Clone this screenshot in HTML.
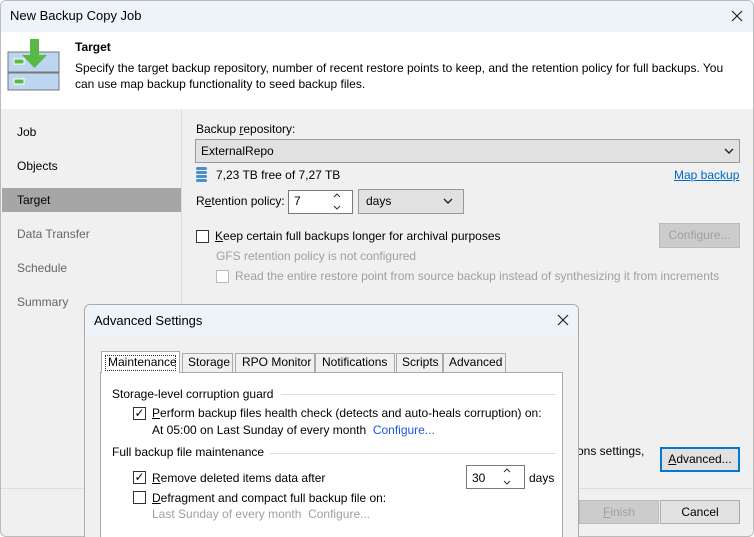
<!DOCTYPE html>
<html style="overflow:hidden;width:754px;height:537px"><head><meta charset="utf-8"><style>
*{box-sizing:border-box;margin:0;padding:0}
body{width:754px;height:537px;overflow:hidden;font-family:"Segoe UI","Liberation Sans",sans-serif;font-size:12px;color:#000;background:#fff;position:relative}
.a{position:absolute;white-space:nowrap}
.win{left:0;top:0;width:754px;height:537px;border:1px solid #bbb;border-radius:6px;background:#f0f0f0;overflow:hidden}
.btn{position:absolute;border:1px solid #adadad;background:#e1e1e1;text-align:center;line-height:22px}
.cb{position:absolute;width:13px;height:13px;border:1px solid #333;background:#fff}
.cb.dis{border-color:#bbb}
.chk{font-size:12px;line-height:11px;text-align:center}
.g{color:#a0a0a0}
.u{text-decoration:underline}
</style></head><body>
<div class="a win">
 <div class="a" style="left:0;top:0;width:754px;height:31px;background:#eef3fa"></div>
 <div class="a" style="left:9px;top:7px;font-size:13px">New Backup Copy Job</div>
 <svg class="a" style="left:730px;top:9px" width="12" height="12"><path d="M1 1L11 11M11 1L1 11" stroke="#222" stroke-width="1.2"/></svg>
 <div class="a" style="left:0;top:31px;width:754px;height:77px;background:#fff"></div>
 <svg class="a" style="left:6px;top:36px" width="56" height="54">
  <rect x="1" y="15" width="51" height="20" fill="#bcd6ef" stroke="#777"/>
  <rect x="1" y="36" width="51" height="17" fill="#bcd6ef" stroke="#777"/>
  <rect x="7" y="22" width="10" height="5" fill="#5ab845" stroke="#fff"/>
  <rect x="7" y="42" width="10" height="5" fill="#5ab845" stroke="#fff"/>
  <path d="M23 2h9v16h8l-12.5 13L15 18h8z" fill="#5ab845"/>
 </svg>
 <div class="a" style="left:74px;top:39px;font-weight:bold">Target</div>
 <div class="a" style="left:74px;top:59px;line-height:16px">Specify the target backup repository, number of recent restore points to keep, and the retention policy for full backups. You<br>can use map backup functionality to seed backup files.</div>
 <div class="a" style="left:180px;top:109px;width:1px;height:378px;background:#ddd"></div>
 <div class="a" style="left:16px;top:124px">Job</div>
 <div class="a" style="left:16px;top:158px">Objects</div>
 <div class="a" style="left:1px;top:187px;width:179px;height:24px;background:#a6a6a6"></div>
 <div class="a" style="left:16px;top:192px">Target</div>
 <div class="a" style="left:16px;top:226px;color:#666">Data Transfer</div>
 <div class="a" style="left:16px;top:260px;color:#666">Schedule</div>
 <div class="a" style="left:16px;top:294px;color:#666">Summary</div>

 <div class="a" style="left:195px;top:121px">Backup <span class="u">r</span>epository:</div>
 <div class="a" style="left:194px;top:138px;width:545px;height:24px;border:1px solid #999;background:#e1e1e1"></div>
 <div class="a" style="left:200px;top:143px">ExternalRepo</div>
 <svg class="a" style="left:723px;top:147px" width="10" height="6"><path d="M1 1L5 5L9 1" stroke="#222" stroke-width="1.4" fill="none"/></svg>
 <svg class="a" style="left:195px;top:166px" width="12" height="16"><g fill="#4a90c8"><rect x="0" y="0" width="11" height="3" rx="1.5"/><rect x="0" y="4" width="11" height="3" rx="1.5"/><rect x="0" y="8" width="11" height="3" rx="1.5"/><rect x="0" y="12" width="11" height="3" rx="1.5"/></g></svg>
 <div class="a" style="left:215px;top:167px">7,23 TB free of 7,27 TB</div>
 <div class="a u" style="left:673px;top:167px;color:#0066cc">Map backup</div>
 <div class="a" style="left:195px;top:193px">R<span class="u">e</span>tention policy:</div>
 <div class="a" style="left:287px;top:189px;width:65px;height:24px;border:1px solid #7a7a7a;background:#fff"></div>
 <div class="a" style="left:293px;top:193px">7</div>
 <svg class="a" style="left:331px;top:191px" width="10" height="20"><path d="M2 5L5 2L8 5M2 14L5 17L8 14" stroke="#333" fill="none"/></svg>
 <div class="a" style="left:357px;top:188px;width:106px;height:25px;border:1px solid #999;background:#e1e1e1"></div>
 <div class="a" style="left:365px;top:193px">days</div>
 <svg class="a" style="left:442px;top:197px" width="10" height="6"><path d="M1 1L5 5L9 1" stroke="#222" stroke-width="1.4" fill="none"/></svg>
 <div class="cb" style="left:195px;top:229px"></div>
 <div class="a" style="left:214px;top:228px"><span class="u">K</span>eep certain full backups longer for archival purposes</div>
 <div class="btn g" style="left:658px;top:222px;width:81px;height:25px;background:#ccc;border-color:#bbb">Configure...</div>
 <div class="a g" style="left:215px;top:248px">GFS retention policy is not configured</div>
 <div class="cb dis" style="left:215px;top:269px"></div>
 <div class="a g" style="left:234px;top:268px">Read the entire restore point from source backup instead of synthesizing it from increments</div>
 <div class="a" style="left:576px;top:443px">ons settings,</div>
 <div class="btn" style="left:659px;top:446px;width:80px;height:25px;border:2px solid #0078d4;line-height:21px"><span class="u">A</span>dvanced...</div>
 <div class="a" style="left:0;top:487px;width:754px;height:1px;background:#ddd"></div>
 <div class="btn g" style="left:578px;top:499px;width:80px;height:24px;background:#ccc;border-color:#bbb"><span class="u">F</span>inish</div>
 <div class="btn" style="left:659px;top:499px;width:80px;height:24px">Cancel</div>
</div>

<div class="a" style="left:84px;top:304px;width:495px;height:233px;border:1px solid #aaa;border-bottom:none;border-radius:6px 6px 0 0;background:#f0f0f0;overflow:hidden">
 <div class="a" style="left:0;top:0;width:495px;height:32px;background:#eef3fa"></div>
 <div class="a" style="left:9px;top:8px;font-size:13px">Advanced Settings</div>
 <svg class="a" style="left:472px;top:9px" width="12" height="12"><path d="M1 1L11 11M11 1L1 11" stroke="#222" stroke-width="1.2"/></svg>
 <div class="a" style="left:15px;top:67px;width:463px;height:166px;border:1px solid #aaa;border-bottom:none;background:#fff"></div>
 <div class="a" style="left:16px;top:46px;width:79px;height:22px;border:1px solid #aaa;border-bottom:none;background:#fff"></div>
 <div class="a" style="left:20px;top:50px;width:71px;height:16px;border:1px dotted #333"></div>
 <div class="a" style="left:23px;top:50px">Maintenance</div>
 <div class="a" style="left:97px;top:48px;width:51px;height:20px;border:1px solid #aaa;background:#f0f0f0;padding:1px 0 0 5px">Storage</div>
 <div class="a" style="left:150px;top:48px;width:80px;height:20px;border:1px solid #aaa;background:#f0f0f0;padding:1px 0 0 6px">RPO Monitor</div>
 <div class="a" style="left:230px;top:48px;width:80px;height:20px;border:1px solid #aaa;background:#f0f0f0;padding:1px 0 0 6px">Notifications</div>
 <div class="a" style="left:311px;top:48px;width:47px;height:20px;border:1px solid #aaa;background:#f0f0f0;padding:1px 0 0 5px">Scripts</div>
 <div class="a" style="left:358px;top:48px;width:63px;height:20px;border:1px solid #aaa;background:#f0f0f0;padding:1px 0 0 5px">Advanced</div>
 <div class="a" style="left:27px;top:82px">Storage-level corruption guard</div>
 <div class="a" style="left:196px;top:89px;width:275px;height:1px;background:#ddd"></div>
 <div class="cb chk" style="left:48px;top:102px">✓</div>
 <div class="a" style="left:67px;top:101px"><span class="u">P</span>erform backup files health check (detects and auto-heals corruption) on:</div>
 <div class="a" style="left:67px;top:118px">At 05:00 on Last Sunday of every month&nbsp; <span style="color:#1a56e8">Configure...</span></div>
 <div class="a" style="left:27px;top:140px">Full backup file maintenance</div>
 <div class="a" style="left:185px;top:148px;width:286px;height:1px;background:#ddd"></div>
 <div class="cb chk" style="left:48px;top:166px">✓</div>
 <div class="a" style="left:67px;top:166px"><span class="u">R</span>emove deleted items data after</div>
 <div class="a" style="left:381px;top:160px;width:59px;height:24px;border:1px solid #7a7a7a;background:#fff"></div>
 <div class="a" style="left:387px;top:166px">30</div>
 <svg class="a" style="left:417px;top:162px" width="10" height="20"><path d="M2 5L5 2L8 5M2 14L5 17L8 14" stroke="#333" fill="none"/></svg>
 <div class="a" style="left:444px;top:166px">days</div>
 <div class="cb" style="left:48px;top:186px"></div>
 <div class="a" style="left:67px;top:186px"><span class="u">D</span>efragment and compact full backup file on:</div>
 <div class="a g" style="left:67px;top:202px">Last Sunday of every month&nbsp; Configure...</div>
</div>
</body></html>
